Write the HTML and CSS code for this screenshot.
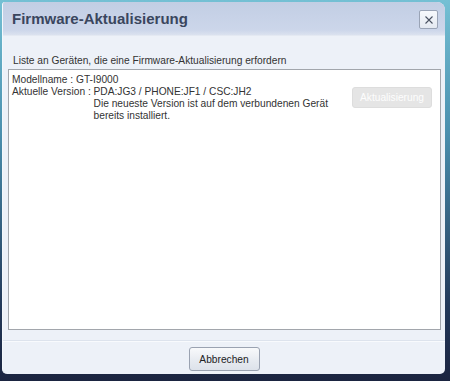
FILE: index.html
```html
<!DOCTYPE html>
<html lang="de">
<head>
    <meta charset="UTF-8">
    <title>Firmware-Aktualisierung</title>
    <link rel="stylesheet" href="styles.css">
</head>
<body>
    <div class="window">
        <div class="titlebar">
            <h1>Firmware-Aktualisierung</h1>
            <button class="close" title="Schließen">
                <svg width="10" height="10" viewBox="0 0 10 10">
                    <path d="M1.5 1.5 L8.5 8.5 M8.5 1.5 L1.5 8.5" stroke="#4a5262" stroke-width="1.1" fill="none"/>
                </svg>
            </button>
        </div>

        <div class="content">
            <p class="intro">Liste an Geräten, die eine Firmware-Aktualisierung erfordern</p>

            <div class="device-list">
                <div class="device">
                    <div class="device-name">Modellname : GT-I9000</div>
                    <div class="device-row">
                        <span class="label">Aktuelle Version : </span>
                        <div class="value">
                            <div>PDA:JG3 / PHONE:JF1 / CSC:JH2</div>
                            <div class="message">Die neueste Version ist auf dem verbundenen Gerät<br>bereits installiert.</div>
                        </div>
                        <button class="update" disabled>Aktualisierung</button>
                    </div>
                </div>
            </div>
        </div>

        <div class="footer">
            <button class="cancel">Abbrechen</button>
        </div>
    </div>
</body>
</html>
```

FILE: styles.css
```css
body {
    margin: 0;
    height: 381px;
    overflow: hidden;
    font-family: 'Liberation Sans', Arial, sans-serif;
    font-size: 10.2px;
    color: #333;
    background: linear-gradient(#74c0d4 0%, #4a8fae 35%, #23395a 80%, #1b2440 100%);
}

.window {
    margin: 2px 5px 0 2px;
    height: 372px;
    background-color: #edf1f8;
    border-radius: 3px 8px 5px 5px;
    border-left: 1px solid #f4f8fc;
    box-sizing: border-box;
    display: flex;
    flex-direction: column;
    overflow: hidden;
}

.titlebar {
    height: 33px;
    flex-shrink: 0;
    display: flex;
    align-items: center;
    justify-content: space-between;
    padding: 0 7px 0 9px;
    background: linear-gradient(#c2cee4, #ccd6ea 85%, #dbe2ef);
    border-bottom: 1px solid #e4e9f2;
}

h1 {
    margin: 0;
    font-size: 15px;
    font-weight: bold;
    color: #3a465e;
}

.close {
    width: 19px;
    height: 19px;
    padding: 0;
    display: flex;
    align-items: center;
    justify-content: center;
    border: 1px solid #9aa4b6;
    border-radius: 2px;
    background: linear-gradient(#f7f9fc, #e4e9f1);
    margin-top: 2px;
}

.content {
    flex: 1;
    display: flex;
    flex-direction: column;
    padding: 0 4px 0 5px;
}

.intro {
    margin: 19px 0 2px 5px;
    line-height: 12px;
}

.device-list {
    height: 261px;
    box-sizing: border-box;
    background: white;
    border: 1px solid #a2a6ac;
    padding: 4px 8px 0 3px;
}

.device {
    line-height: 12px;
}

.device-row {
    display: flex;
    align-items: flex-start;
}

.label {
    white-space: pre;
}

.value {
    flex: 1;
}

.update {
    width: 80px;
    height: 21px;
    margin-top: 1px;
    padding: 0;
    font-family: inherit;
    font-size: 10.2px;
    color: #fdfdfd;
    background-color: #e5e5e5;
    border: 1px solid #dddddd;
    border-radius: 3px;
}

.footer {
    flex: 1;
    margin-top: 10px;
    border-top: 1px solid #dde3ed;
    box-shadow: inset 0 1px 0 #f8fafd;
    display: flex;
    justify-content: center;
    padding-top: 6px;
}

.cancel {
    width: 71px;
    height: 24px;
    padding: 0;
    font-family: inherit;
    font-size: 10.2px;
    color: #222;
    background: linear-gradient(#f8f9fb, #e6eaf0 60%, #dde2ea);
    border: 1px solid #9aa2b1;
    border-radius: 3px;
    cursor: pointer;
}
```
